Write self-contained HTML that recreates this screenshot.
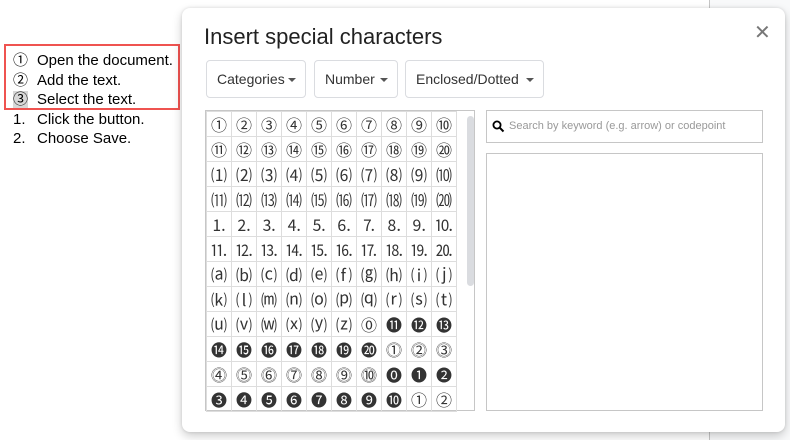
<!DOCTYPE html>
<html><head><meta charset="utf-8"><style>
*{box-sizing:border-box;margin:0;padding:0}
body{width:790px;height:440px;overflow:hidden;background:#fff;font-family:"Liberation Sans","Noto Sans CJK JP",sans-serif;position:relative}
.bgr{position:absolute;left:709px;top:0;width:81px;height:440px;background:#f8f9fa;border-left:1px solid #c6c6c6}
.doc{position:absolute;left:13px;top:51px;font-size:15px;color:#000;line-height:19.5px}
.doc div{white-space:nowrap}
.doc .n{display:inline-block;width:24px}
.red{position:absolute;left:4px;top:44px;width:176px;height:66px;border:2px solid #ef5350}
.hl{background:#d8d8d8}
.dlg{position:absolute;left:182px;top:8px;width:603px;height:424px;background:#fff;border-radius:8px;box-shadow:0 4px 10px rgba(0,0,0,.2),0 0 3px rgba(0,0,0,.12)}
h1{position:absolute;left:22px;top:16px;font-weight:400;font-size:22px;color:#222}
.x{position:absolute;left:572px;top:12px;font-size:20px;color:#777}
.dd{position:absolute;top:52px;height:38px;border:1px solid #dadce0;border-radius:4px;font-size:14px;color:#333;line-height:36px;padding-left:10px}
.dd:after{content:"";position:absolute;right:9px;top:17px;border:4px solid transparent;border-top:4px solid #555;border-bottom:0}
.grid{position:absolute;left:23px;top:102px;width:270px;height:301px;border:1px solid #c6c6c6}
table{border-collapse:collapse;position:absolute;left:0;top:0}
td{width:25px;height:25px;border:1px solid #ddd;text-align:center;font-size:16px;color:#333;padding:0;font-family:"Noto Sans CJK JP",sans-serif;line-height:23px;overflow:hidden}
.sb{position:absolute;left:261px;top:5px;width:7px;height:170px;background:#dadce0;border-radius:4px}
.srch{position:absolute;left:304px;top:102px;width:277px;height:33px;border:1px solid #c6c6c6;font-size:11px;color:#999;line-height:31px;padding-left:22px}
.srch svg{position:absolute;left:5px;top:9px}
.prev{position:absolute;left:304px;top:145px;width:277px;height:258px;border:1px solid #c6c6c6}
</style></head><body>
<div class="bgr"></div>
<div class="doc">
<div><span class="n">①</span>Open the document.</div>
<div><span class="n">②</span>Add the text.</div>
<div><span class="n"><span class="hl">③</span></span>Select the text.</div>
<div><span class="n">1.</span>Click the button.</div>
<div><span class="n">2.</span>Choose Save.</div>
</div>
<div class="red"></div>
<div class="dlg">
<h1>Insert special characters</h1>
<div class="x">✕</div>
<div class="dd" style="left:24px;width:100px">Categories</div>
<div class="dd" style="left:132px;width:84px">Number</div>
<div class="dd" style="left:223px;width:139px">Enclosed/Dotted</div>
<div class="grid"><table>
<tr><td>①</td><td>②</td><td>③</td><td>④</td><td>⑤</td><td>⑥</td><td>⑦</td><td>⑧</td><td>⑨</td><td>⑩</td></tr>
<tr><td>⑪</td><td>⑫</td><td>⑬</td><td>⑭</td><td>⑮</td><td>⑯</td><td>⑰</td><td>⑱</td><td>⑲</td><td>⑳</td></tr>
<tr><td>⑴</td><td>⑵</td><td>⑶</td><td>⑷</td><td>⑸</td><td>⑹</td><td>⑺</td><td>⑻</td><td>⑼</td><td>⑽</td></tr>
<tr><td>⑾</td><td>⑿</td><td>⒀</td><td>⒁</td><td>⒂</td><td>⒃</td><td>⒄</td><td>⒅</td><td>⒆</td><td>⒇</td></tr>
<tr><td>⒈</td><td>⒉</td><td>⒊</td><td>⒋</td><td>⒌</td><td>⒍</td><td>⒎</td><td>⒏</td><td>⒐</td><td>⒑</td></tr>
<tr><td>⒒</td><td>⒓</td><td>⒔</td><td>⒕</td><td>⒖</td><td>⒗</td><td>⒘</td><td>⒙</td><td>⒚</td><td>⒛</td></tr>
<tr><td>⒜</td><td>⒝</td><td>⒞</td><td>⒟</td><td>⒠</td><td>⒡</td><td>⒢</td><td>⒣</td><td>⒤</td><td>⒥</td></tr>
<tr><td>⒦</td><td>⒧</td><td>⒨</td><td>⒩</td><td>⒪</td><td>⒫</td><td>⒬</td><td>⒭</td><td>⒮</td><td>⒯</td></tr>
<tr><td>⒰</td><td>⒱</td><td>⒲</td><td>⒳</td><td>⒴</td><td>⒵</td><td>⓪</td><td>⓫</td><td>⓬</td><td>⓭</td></tr>
<tr><td>⓮</td><td>⓯</td><td>⓰</td><td>⓱</td><td>⓲</td><td>⓳</td><td>⓴</td><td>⓵</td><td>⓶</td><td>⓷</td></tr>
<tr><td>⓸</td><td>⓹</td><td>⓺</td><td>⓻</td><td>⓼</td><td>⓽</td><td>⓾</td><td>⓿</td><td>➊</td><td>➋</td></tr>
<tr><td>➌</td><td>➍</td><td>➎</td><td>➏</td><td>➐</td><td>➑</td><td>➒</td><td>➓</td><td>①</td><td>②</td></tr>
</table><div class="sb"></div></div>
<div class="srch"><svg width="13" height="13" viewBox="0 0 13 13"><circle cx="5" cy="5" r="3.6" fill="none" stroke="#000" stroke-width="1.8"/><path d="M7.6 7.6L11.5 11.5" stroke="#000" stroke-width="2"/></svg>Search by keyword (e.g. arrow) or codepoint</div>
<div class="prev"></div>
</div>
</body></html>
